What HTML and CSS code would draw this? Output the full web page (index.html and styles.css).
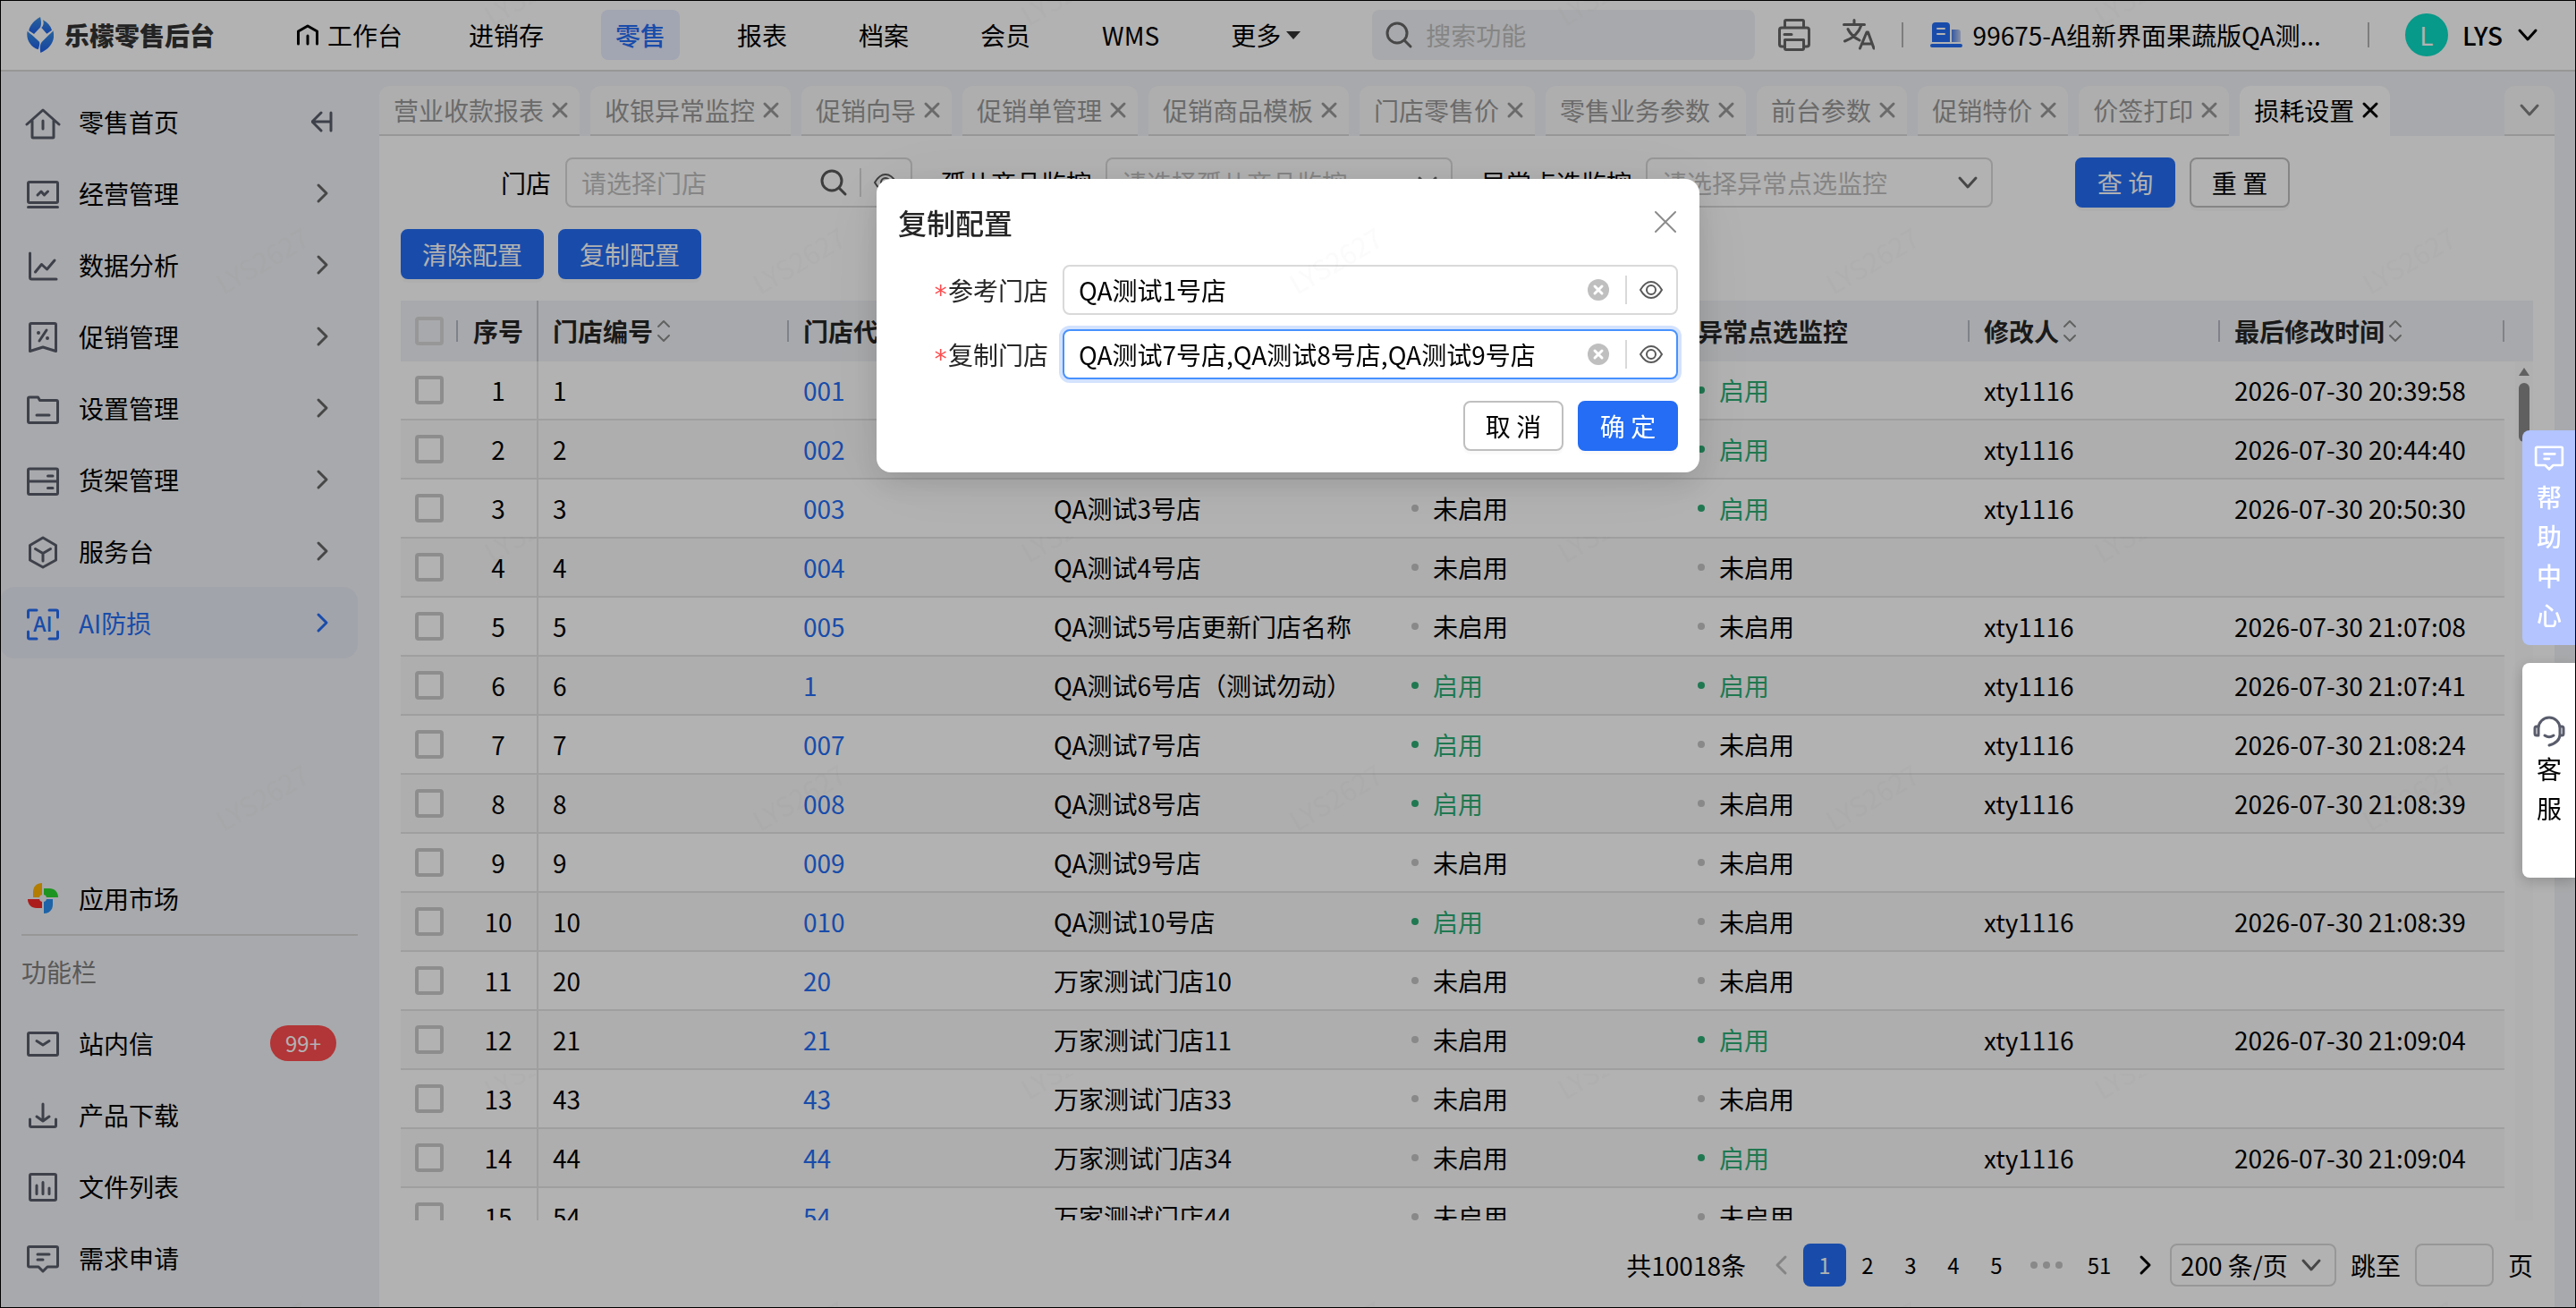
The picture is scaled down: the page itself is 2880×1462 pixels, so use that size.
FILE: index.html
```html
<!DOCTYPE html>
<html lang="zh-CN">
<head>
<meta charset="utf-8">
<meta name="viewport" content="width=device-width, initial-scale=1">
<title>乐檬零售后台</title>
<link rel="stylesheet" href="styles.css">
</head>
<body>
<svg class="defs" aria-hidden="true">
  <defs>
    <linearGradient id="g-logo" x1="0" y1="0" x2="0" y2="1"><stop offset="0" stop-color="#3a8fe0"/><stop offset="1" stop-color="#1f5fe8"/></linearGradient>
    <linearGradient id="g-build" x1="0" y1="0" x2="1" y2="0"><stop offset="0" stop-color="#4f80e8"/><stop offset="1" stop-color="#c4d0ec"/></linearGradient>
    <symbol id="chev-r" viewBox="0 0 24 24"><path d="M8 3l9 9-9 9"/></symbol>
    <symbol id="chev-l" viewBox="0 0 24 24"><path d="M16 3l-9 9 9 9"/></symbol>
    <symbol id="chev-d" viewBox="0 0 24 24"><path d="M3 7l9 10 9-10"/></symbol>
    <symbol id="close" viewBox="0 0 24 24"><path d="M5 5l14 14M19 5L5 19"/></symbol>
    <symbol id="sort" viewBox="0 0 16 28"><path d="M2 9l6-6 6 6M2 19l6 6 6-6"/></symbol>
    <symbol id="search" viewBox="0 0 32 32"><circle cx="14" cy="14" r="11"/><path d="M22 22l7 7"/></symbol>
    <symbol id="eye" viewBox="0 0 28 24"><path d="M2 12C6 5 10 3 14 3s8 2 12 9c-4 7-8 9-12 9S6 19 2 12z"/><circle cx="14" cy="12" r="5"/></symbol>
    <symbol id="clear" viewBox="0 0 24 24"><circle cx="12" cy="12" r="12" fill="#bfbfbf" stroke="none"/><path d="M8 8l8 8M16 8l-8 8" stroke="#fff" stroke-width="3"/></symbol>
    <symbol id="message" viewBox="0 0 40 40"><path d="M5 7.500h30a1.500 1.500 0 0 1 1.500 1.500v19.500a1.500 1.500 0 0 1-1.500 1.500H25l-5 5-5-5H5a1.500 1.500 0 0 1-1.500-1.500V9A1.500 1.500 0 0 1 5 7.500zM14 16h13M14 22h6"/></symbol>
  </defs>
</svg>

<div class="app">
  <header class="topbar">
    <div class="brand">
      <svg class="logo" viewBox="0 0 90 120" fill="url(#g-logo)"><path d="M45 0C24 12 9 28 7 46L24 57 44 36C50 28 48 12 45 0z"/><path d="M54 10C58 20 56 30 49 36L67 56 84 44C80 30 70 18 54 10z"/><path d="M2 47C-4 74 12 100 38 109 42 98 44 90 42 83L17 60C11 55 5 51 2 47z"/><path d="M88 46C97 76 80 106 46 120 43 106 44 92 50 84L74 60C80 55 85 51 88 46z"/></svg>
      <strong class="brand-name">乐檬零售后台</strong>
    </div>
    <nav class="nav">
      <a href="#" class="nav-item nav-home"><svg class="nav-icon" viewBox="0 0 24 24"><path d="M1.500 22V8L12 2l10.500 6v14M12 13v9"/></svg>工作台</a>
      <a href="#" class="nav-item">进销存</a>
      <a href="#" class="nav-item is-active">零售</a>
      <a href="#" class="nav-item">报表</a>
      <a href="#" class="nav-item">档案</a>
      <a href="#" class="nav-item">会员</a>
      <a href="#" class="nav-item">WMS</a>
      <a href="#" class="nav-item">更多<span class="caret"></span></a>
    </nav>
    <label class="top-search"><svg class="ico-32"><use href="#search"/></svg><input type="text" placeholder="搜索功能" aria-label="搜索功能"></label>
    <div class="top-tools">
      <button type="button" class="icon-btn" aria-label="打印"><svg class="ico-40" viewBox="0 0 40 40"><path d="M9.500 12V5a1.500 1.500 0 0 1 1.500-1.500h18A1.500 1.500 0 0 1 30.500 5v7M9 33H6a2.500 2.500 0 0 1-2.500-2.500v-16A2.500 2.500 0 0 1 6 12h28a2.500 2.500 0 0 1 2.500 2.500v16A2.500 2.500 0 0 1 34 33h-3M9.500 25.500h21V35a1.500 1.500 0 0 1-1.500 1.500H11A1.500 1.500 0 0 1 9.500 35zM9 19.500h8"/></svg></button>
      <button type="button" class="icon-btn" aria-label="语言"><svg class="ico-40 thick" viewBox="0 0 40 40"><path d="M5.500 8.500h23M17 3.500v5M25 9C22 18 15 24 6.500 27M10 13.500C13 20 17 23 23 26M23.500 35l7.500-18h1.500L39 35M26 30h11"/></svg></button>
      <span class="rule"></span>
      <a href="#" class="company"><svg class="company-icon" viewBox="0 0 36 28"><path d="M2 22V4a4 4 0 0 1 4-4h12a4 4 0 0 1 4 4v18z" fill="#246df4"/><path d="M24 8h7a3 3 0 0 1 3 3v11H24z" fill="url(#g-build)"/><rect y="24" width="36" height="4" rx="2" fill="#246df4"/><path d="M8 7h8M8 13h8" stroke="#fff" stroke-width="2"/></svg>99675-A组新界面果蔬版QA测...</a>
      <span class="rule rule-far"></span>
      <button type="button" class="account"><span class="avatar">L</span><span>LYS</span><svg class="ico-24"><use href="#chev-d"/></svg></button>
    </div>
  </header>

  <aside class="sidebar">
    <nav class="side-group">
      <div class="side-item side-first"><a href="#" class="side-link"><svg class="ico-40" viewBox="0 0 40 40"><path d="M2 23L20 7l18 16M8 18.500V37a1 1 0 0 0 1 1h22a1 1 0 0 0 1-1V18.500M20 19v9"/></svg>零售首页</a><button type="button" class="icon-btn" aria-label="收起菜单"><svg class="ico-24 thick" viewBox="0 0 24 24"><path d="M11 2L1 12l10 10M1 12h21M22 2v20"/></svg></button></div>
      <a href="#" class="side-item"><svg class="ico-40" viewBox="0 0 40 40"><rect x="3.500" y="7.500" width="33" height="23" rx="1.500"/><path d="M3.500 35.500h33M14 22l4-4 3.500 4 4-4"/></svg>经营管理<svg class="ico-24 tail"><use href="#chev-r"/></svg></a>
      <a href="#" class="side-item"><svg class="ico-40" viewBox="0 0 40 40"><path d="M5.500 7v27a2 2 0 0 0 2 2H35M11.500 28l7-8.500 6 5.500L33 15"/></svg>数据分析<svg class="ico-24 tail"><use href="#chev-r"/></svg></a>
      <a href="#" class="side-item"><svg class="ico-40" viewBox="0 0 40 40"><path d="M7 5.500h26a1.500 1.500 0 0 1 1.500 1.500v29.500L20 32 5.500 36.500V7A1.500 1.500 0 0 1 7 5.500zM24 13l-8 12"/><path d="M15 16h0M25 22h0" stroke-width="4"/></svg>促销管理<svg class="ico-24 tail"><use href="#chev-r"/></svg></a>
      <a href="#" class="side-item"><svg class="ico-40" viewBox="0 0 40 40"><path d="M5 8h9.500l2 3.500H35a1.500 1.500 0 0 1 1.500 1.500v22a1.500 1.500 0 0 1-1.500 1.500H5A1.500 1.500 0 0 1 3.500 35V9.500A1.500 1.500 0 0 1 5 8zM13 28h14"/></svg>设置管理<svg class="ico-24 tail"><use href="#chev-r"/></svg></a>
      <a href="#" class="side-item"><svg class="ico-40" viewBox="0 0 40 40"><rect x="3.500" y="8" width="33" height="28.500" rx="1.500"/><path d="M3.500 22h33M25.500 16H31M25.500 29.500H31"/></svg>货架管理<svg class="ico-24 tail"><use href="#chev-r"/></svg></a>
      <a href="#" class="side-item"><svg class="ico-40" viewBox="0 0 40 40"><path d="M20 5l14.500 8.500v16.500L20 38 5.500 30V13.500zM11.500 17.500L20 22.500l8.500-5M20 22.500V31"/></svg>服务台<svg class="ico-24 tail"><use href="#chev-r"/></svg></a>
      <a href="#" class="side-item is-active"><svg class="ico-40" viewBox="0 0 40 40"><path d="M3.500 14V7.500A1.500 1.500 0 0 1 5 6h8M27 6h8a1.500 1.500 0 0 1 1.500 1.500V14M36.500 30v6.500A1.500 1.500 0 0 1 35 38h-8M13 38H5a1.500 1.500 0 0 1-1.500-1.500V30"/><text x="20" y="30" class="ai-mark">AI</text></svg>AI防损<svg class="ico-24 tail"><use href="#chev-r"/></svg></a>
    </nav>
    <nav class="side-group">
      <a href="#" class="side-item"><svg class="ico-40 pinwheel" viewBox="0 0 40 40"><path d="M19 3v16H9v-6C9 7 13 3 19 3z" fill="#ffb300"/><path d="M37 19H21V9h6c6 0 10 4 10 10z" fill="#2ad52e"/><path d="M3 21h16v10h-6C7 31 3 27 3 21z" fill="#f52a2a"/><path d="M21 37V21h10v6c0 6-4 10-10 10z" fill="#2a8ff0"/><circle cx="20" cy="20" r="4" fill="#eef1f5"/></svg>应用市场</a>
      <hr class="side-rule">
      <p class="side-title">功能栏</p>
      <a href="#" class="side-item"><svg class="ico-40" viewBox="0 0 40 40"><rect x="3.500" y="8.500" width="33" height="25" rx="1.500"/><path d="M13 17.500l7 4.500 7-4.500"/></svg>站内信<span class="badge">99+</span></a>
      <a href="#" class="side-item"><svg class="ico-40" viewBox="0 0 40 40"><path d="M5.500 25v7a1.500 1.500 0 0 0 1.500 1.500h26a1.500 1.500 0 0 0 1.500-1.500v-7M20 8v19M13 22l7 5 7-5"/></svg>产品下载</a>
      <a href="#" class="side-item"><svg class="ico-40" viewBox="0 0 40 40"><rect x="5.500" y="6.500" width="29" height="29" rx="1.500"/><path d="M13 19v9.500M20 15.500v13M27 22v6.500"/></svg>文件列表</a>
      <a href="#" class="side-item"><svg class="ico-40"><use href="#message"/></svg>需求申请</a>
    </nav>
  </aside>

  <main class="content">
    <div class="tabs">
      <a href="#" class="tab">营业收款报表<svg class="ico-24"><use href="#close"/></svg></a>
      <a href="#" class="tab">收银异常监控<svg class="ico-24"><use href="#close"/></svg></a>
      <a href="#" class="tab">促销向导<svg class="ico-24"><use href="#close"/></svg></a>
      <a href="#" class="tab">促销单管理<svg class="ico-24"><use href="#close"/></svg></a>
      <a href="#" class="tab">促销商品模板<svg class="ico-24"><use href="#close"/></svg></a>
      <a href="#" class="tab">门店零售价<svg class="ico-24"><use href="#close"/></svg></a>
      <a href="#" class="tab">零售业务参数<svg class="ico-24"><use href="#close"/></svg></a>
      <a href="#" class="tab">前台参数<svg class="ico-24"><use href="#close"/></svg></a>
      <a href="#" class="tab">促销特价<svg class="ico-24"><use href="#close"/></svg></a>
      <a href="#" class="tab">价签打印<svg class="ico-24"><use href="#close"/></svg></a>
      <a href="#" class="tab is-active">损耗设置<svg class="ico-24"><use href="#close"/></svg></a>
      <button type="button" class="tab tab-more" aria-label="更多标签"><svg class="ico-24"><use href="#chev-d"/></svg></button>
    </div>

    <section class="panel">
      <form class="filters">
        <label class="filter-label" for="f-store">门店</label>
        <div class="field">
          <input id="f-store" type="text" placeholder="请选择门店">
          <svg class="ico-32"><use href="#search"/></svg><span class="field-rule"></span><svg class="ico-eye"><use href="#eye"/></svg>
        </div>
        <label class="filter-label" for="f-orphan">孤儿商品监控</label>
        <div class="field select-field">
          <select id="f-orphan" class="is-empty"><option>请选择孤儿商品监控</option></select>
          <svg class="ico-24"><use href="#chev-d"/></svg>
        </div>
        <label class="filter-label" for="f-point">异常点选监控</label>
        <div class="field select-field">
          <select id="f-point" class="is-empty"><option>请选择异常点选监控</option></select>
          <svg class="ico-24"><use href="#chev-d"/></svg>
        </div>
        <div class="filter-actions">
          <button type="button" class="btn btn-primary">查 询</button>
          <button type="reset" class="btn">重 置</button>
        </div>
      </form>

      <div class="actions">
        <button type="button" class="btn btn-primary">清除配置</button>
        <button type="button" class="btn btn-primary">复制配置</button>
      </div>

      <div class="table-area">
        <table class="grid">
          <colgroup><col class="c-check"><col class="c-no"><col class="c-id"><col class="c-code"><col class="c-name"><col class="c-flag"><col class="c-flag"><col class="c-user"><col></colgroup>
          <thead>
            <tr>
              <th><span class="th"><input type="checkbox" aria-label="全选"></span></th>
              <th class="no">序号</th>
              <th><span class="th">门店编号<svg class="ico-sort"><use href="#sort"/></svg></span></th>
              <th><span class="th">门店代码</span></th>
              <th><span class="th">门店名称</span></th>
              <th><span class="th">孤儿商品监控</span></th>
              <th><span class="th">异常点选监控</span></th>
              <th><span class="th">修改人<svg class="ico-sort"><use href="#sort"/></svg></span></th>
              <th><span class="th">最后修改时间<svg class="ico-sort"><use href="#sort"/></svg></span></th>
            </tr>
          </thead>
          <tbody>
            <tr><td><input type="checkbox" aria-label="选择第1行"></td><td class="no">1</td><td>1</td><td><a href="#">001</a></td><td>QA测试1号店</td><td><span class="flag on">启用</span></td><td><span class="flag on">启用</span></td><td>xty1116</td><td>2026-07-30 20:39:58</td></tr>
            <tr><td><input type="checkbox" aria-label="选择第2行"></td><td class="no">2</td><td>2</td><td><a href="#">002</a></td><td>QA测试2号店</td><td><span class="flag on">启用</span></td><td><span class="flag on">启用</span></td><td>xty1116</td><td>2026-07-30 20:44:40</td></tr>
            <tr><td><input type="checkbox" aria-label="选择第3行"></td><td class="no">3</td><td>3</td><td><a href="#">003</a></td><td>QA测试3号店</td><td><span class="flag">未启用</span></td><td><span class="flag on">启用</span></td><td>xty1116</td><td>2026-07-30 20:50:30</td></tr>
            <tr><td><input type="checkbox" aria-label="选择第4行"></td><td class="no">4</td><td>4</td><td><a href="#">004</a></td><td>QA测试4号店</td><td><span class="flag">未启用</span></td><td><span class="flag">未启用</span></td><td></td><td></td></tr>
            <tr><td><input type="checkbox" aria-label="选择第5行"></td><td class="no">5</td><td>5</td><td><a href="#">005</a></td><td>QA测试5号店更新门店名称</td><td><span class="flag">未启用</span></td><td><span class="flag">未启用</span></td><td>xty1116</td><td>2026-07-30 21:07:08</td></tr>
            <tr><td><input type="checkbox" aria-label="选择第6行"></td><td class="no">6</td><td>6</td><td><a href="#">1</a></td><td>QA测试6号店（测试勿动）</td><td><span class="flag on">启用</span></td><td><span class="flag on">启用</span></td><td>xty1116</td><td>2026-07-30 21:07:41</td></tr>
            <tr><td><input type="checkbox" aria-label="选择第7行"></td><td class="no">7</td><td>7</td><td><a href="#">007</a></td><td>QA测试7号店</td><td><span class="flag on">启用</span></td><td><span class="flag">未启用</span></td><td>xty1116</td><td>2026-07-30 21:08:24</td></tr>
            <tr><td><input type="checkbox" aria-label="选择第8行"></td><td class="no">8</td><td>8</td><td><a href="#">008</a></td><td>QA测试8号店</td><td><span class="flag on">启用</span></td><td><span class="flag">未启用</span></td><td>xty1116</td><td>2026-07-30 21:08:39</td></tr>
            <tr><td><input type="checkbox" aria-label="选择第9行"></td><td class="no">9</td><td>9</td><td><a href="#">009</a></td><td>QA测试9号店</td><td><span class="flag">未启用</span></td><td><span class="flag">未启用</span></td><td></td><td></td></tr>
            <tr><td><input type="checkbox" aria-label="选择第10行"></td><td class="no">10</td><td>10</td><td><a href="#">010</a></td><td>QA测试10号店</td><td><span class="flag on">启用</span></td><td><span class="flag">未启用</span></td><td>xty1116</td><td>2026-07-30 21:08:39</td></tr>
            <tr><td><input type="checkbox" aria-label="选择第11行"></td><td class="no">11</td><td>20</td><td><a href="#">20</a></td><td>万家测试门店10</td><td><span class="flag">未启用</span></td><td><span class="flag">未启用</span></td><td></td><td></td></tr>
            <tr><td><input type="checkbox" aria-label="选择第12行"></td><td class="no">12</td><td>21</td><td><a href="#">21</a></td><td>万家测试门店11</td><td><span class="flag">未启用</span></td><td><span class="flag on">启用</span></td><td>xty1116</td><td>2026-07-30 21:09:04</td></tr>
            <tr><td><input type="checkbox" aria-label="选择第13行"></td><td class="no">13</td><td>43</td><td><a href="#">43</a></td><td>万家测试门店33</td><td><span class="flag">未启用</span></td><td><span class="flag">未启用</span></td><td></td><td></td></tr>
            <tr><td><input type="checkbox" aria-label="选择第14行"></td><td class="no">14</td><td>44</td><td><a href="#">44</a></td><td>万家测试门店34</td><td><span class="flag">未启用</span></td><td><span class="flag on">启用</span></td><td>xty1116</td><td>2026-07-30 21:09:04</td></tr>
            <tr><td><input type="checkbox" aria-label="选择第15行"></td><td class="no">15</td><td>54</td><td><a href="#">54</a></td><td>万家测试门店44</td><td><span class="flag">未启用</span></td><td><span class="flag">未启用</span></td><td></td><td></td></tr>
          </tbody>
        </table>
        <div class="scroll-col"><div class="scroll-head"></div><div class="scroll-track"><i class="arrow-up"></i><i class="thumb"></i><i class="arrow-down"></i></div></div>
      </div>

      <div class="pager">
        <span class="pager-total">共10018条</span>
        <button type="button" class="page" disabled aria-label="上一页"><svg class="ico-24"><use href="#chev-l"/></svg></button>
        <button type="button" class="page is-active">1</button>
        <button type="button" class="page">2</button>
        <button type="button" class="page">3</button>
        <button type="button" class="page">4</button>
        <button type="button" class="page">5</button>
        <span class="page-dots"><i></i><i></i><i></i></span>
        <button type="button" class="page page-last">51</button>
        <button type="button" class="page" aria-label="下一页"><svg class="ico-24"><use href="#chev-r"/></svg></button>
        <div class="field select-field size-field"><select aria-label="每页条数"><option>200 条/页</option></select><svg class="ico-24"><use href="#chev-d"/></svg></div>
        <label class="jump" for="jump">跳至</label>
        <input id="jump" class="jump-input" type="text">
        <span>页</span>
      </div>
    </section>
  </main>
</div>

<div class="mask"></div>

<div class="side-floats">
  <button type="button" class="float float-help"><svg class="float-msg"><use href="#message"/></svg><span>帮</span><span>助</span><span>中</span><span>心</span></button>
  <button type="button" class="float float-service"><svg class="ico-40" viewBox="0 0 40 40"><path d="M8 24V17a12 12 0 0 1 24 0v7c0 6-5 10-12 12M7.500 15H6a2 2 0 0 0-2 2v6a2 2 0 0 0 2 2h2M32.500 15H34a2 2 0 0 1 2 2v6a2 2 0 0 1-2 2h-2M15 25c3 2 7 2 10 0"/></svg><span>客</span><span>服</span></button>
</div>

<div class="dialog-layer">
  <form class="dialog" role="dialog" aria-labelledby="dlg-title">
    <div class="dialog-head"><h2 id="dlg-title">复制配置</h2><button type="button" class="icon-btn dialog-close" aria-label="关闭"><svg class="ico-32" viewBox="0 0 32 32"><path d="M5 5l22 22M27 5L5 27"/></svg></button></div>
    <div class="dialog-row">
      <label for="d-from"><span class="req">*</span>参考门店</label>
      <div class="field"><input id="d-from" type="text" value="QA测试1号店"><svg class="ico-24 clear"><use href="#clear"/></svg><span class="field-rule"></span><svg class="ico-eye"><use href="#eye"/></svg></div>
    </div>
    <div class="dialog-row">
      <label for="d-to"><span class="req">*</span>复制门店</label>
      <div class="field is-focused"><input id="d-to" type="text" value="QA测试7号店,QA测试8号店,QA测试9号店"><svg class="ico-24 clear"><use href="#clear"/></svg><span class="field-rule"></span><svg class="ico-eye"><use href="#eye"/></svg></div>
    </div>
    <div class="dialog-foot"><button type="button" class="btn">取 消</button><button type="button" class="btn btn-primary">确 定</button></div>
  </form>
</div>

<svg class="watermark" aria-hidden="true">
  <defs><pattern id="wm" width="600" height="600" patternUnits="userSpaceOnUse"><text x="250" y="330" transform="rotate(-30 250 330)">LYS2627</text><text x="550" y="30" transform="rotate(-30 550 30)">LYS2627</text></pattern></defs>
  <rect width="100%" height="100%" fill="url(#wm)"/>
</svg>
</body>
</html>
```
FILE: styles.css
```css
:root {
  --primary: #246df4;
  --line: #d9d9d9;
  --text: #000;
  --surface: #f1f3f6;
  --green: #2ead75;
}

* { box-sizing: border-box; }

body {
  margin: 0;
  font-family: "Noto Sans CJK SC", sans-serif;
  font-size: 28px;
  line-height: 44px;
  color: var(--text);
  overflow: hidden;
}

a { color: inherit; text-decoration: none; }
button, input, select { font: inherit; color: inherit; }
button { cursor: pointer; }

svg {
  flex: none;
  fill: none;
  stroke: currentColor;
  stroke-width: 2;
  stroke-linecap: round;
  stroke-linejoin: round;
}

.defs { position: absolute; width: 0; height: 0; }
.ico-24 { width: 24px; height: 24px; }
.ico-32 { width: 32px; height: 32px; stroke-width: 3; }
.ico-40 { width: 40px; height: 40px; stroke-width: 3; }
.ico-eye { width: 28px; height: 24px; color: #595959; }
.ico-sort { width: 16px; height: 28px; color: #8c8c8c; }

.icon-btn {
  display: flex;
  padding: 0;
  border: 0;
  background: none;
  color: #666;
}

/* Page shell */
.app {
  display: grid;
  grid-template: 80px minmax(0, 1fr) / 424px minmax(0, 1fr);
  height: 100vh;
  background: var(--surface);
}

/* Top bar */
.topbar {
  grid-column: 1 / -1;
  display: flex;
  align-items: center;
  padding: 0 42px 0 30px;
  background: #fff;
  border-bottom: 2px solid var(--line);
  white-space: nowrap;
}

.brand { display: flex; align-items: center; gap: 12px; }
.logo { width: 30px; height: 40px; stroke: none; fill: url(#g-logo); }
.brand-name { font-weight: 900; color: #333; }

.nav { display: flex; gap: 48px; margin-left: 76px; }
.nav-item {
  display: flex;
  align-items: center;
  height: 56px;
  padding: 0 16px;
  border-radius: 8px;
}
.nav-item.is-active { background: #e9ecff; color: var(--primary); font-weight: 500; }
.nav-home { gap: 10px; padding-right: 10px; }
.nav-icon { width: 24px; height: 24px; stroke-width: 3; }
.caret {
  margin-left: 6px;
  border: 8px solid transparent;
  border-top: 9px solid #333;
  border-bottom: 0;
}

.top-search {
  display: flex;
  align-items: center;
  gap: 14px;
  flex: 0 1 428px;
  height: 56px;
  margin-left: 64px;
  padding: 0 14px;
  border-radius: 8px;
  background: var(--surface);
  color: #666;
}
.top-search input { flex: 1; min-width: 0; border: 0; padding: 0; background: none; outline: 0; }
::placeholder { color: #bfbfbf; opacity: 1; }

.top-tools { display: flex; align-items: center; margin-left: auto; }
.top-tools > .icon-btn { margin-right: 30px; }
.thick { stroke-width: 3; }
.rule { width: 2px; height: 28px; background: #b3b3b3; }
.company { display: flex; align-items: center; gap: 12px; margin: 0 52px 0 30px; }
.company-icon { width: 36px; height: 28px; stroke: none; }
.account {
  display: flex;
  align-items: center;
  gap: 16px;
  margin-left: 40px;
  padding: 0;
  border: 0;
  background: none;
  font-weight: 500;
}
.account .ico-24 { stroke-width: 3; }
.avatar {
  width: 48px;
  height: 48px;
  border-radius: 50%;
  background: #0bdcc4;
  color: #fff;
  font-weight: 400;
  line-height: 48px;
}

/* Side menu */
.sidebar {
  display: flex;
  flex-direction: column;
  justify-content: space-between;
  padding: 16px 24px 16px 0;
  overflow: hidden;
}
.side-item {
  display: flex;
  align-items: center;
  gap: 20px;
  height: 80px;
  padding: 0 28px;
  border-radius: 16px;
}
.side-item svg { color: #595c6b; }
.side-item .tail { margin-left: auto; color: #666; stroke-width: 3; }
.side-item.is-active { background: #e9ebf5; color: var(--primary); }
.side-item.is-active svg { color: var(--primary); }
.side-first { justify-content: space-between; }
.side-link { display: flex; align-items: center; gap: 20px; }
.ai-mark {
  font-size: 23px;
  font-weight: 500;
  text-anchor: middle;
  fill: currentColor;
  stroke: none;
}
.pinwheel { stroke: none; }
.side-rule { margin: 0 0 0 24px; border: 0; border-top: 2px solid var(--line); }
.side-title { margin: 0; padding-left: 24px; color: #808080; line-height: 80px; }
.badge {
  margin-left: auto;
  margin-right: -4px;
  padding: 0 17px;
  border-radius: 20px;
  background: #ff4d4f;
  color: #fff;
  font-size: 24px;
  line-height: 40px;
}

/* Tabs */
.content {
  display: flex;
  flex-direction: column;
  min-width: 0;
  padding: 16px 24px 0 0;
}
.tabs { display: flex; gap: 12px; white-space: nowrap; }
.tab {
  display: flex;
  align-items: center;
  gap: 6px;
  height: 56px;
  padding: 0 10px 0 16px;
  border: 0;
  border-bottom: 2px solid var(--line);
  border-radius: 12px 12px 0 0;
  background: #fafafa;
  color: #999;
}
.tab.is-active { background: #fff; border-color: #fff; color: #000; }
.tab .ico-24 { stroke-width: 3; }
.tab-more { margin-left: auto; padding: 0 16px; color: #808080; }

/* Panel */
.panel {
  flex: 1;
  display: flex;
  flex-direction: column;
  min-height: 0;
  padding: 24px;
  background: #fff;
}
.filters { display: flex; align-items: center; gap: 16px; }
.filter-label { width: 168px; text-align: right; white-space: nowrap; }
.filters .field { width: 388px; }
.filters .field + .filter-label { margin-left: 16px; }
.filter-actions { display: flex; gap: 16px; margin-left: 76px; }

.field {
  display: flex;
  align-items: center;
  gap: 13px;
  min-width: 0;
  height: 56px;
  padding: 0 14px 0 16px;
  border: 2px solid var(--line);
  border-radius: 8px;
  background: #fff;
}
.field .ico-32 { color: #595959; }
.field .clear { margin-right: 5px; }
.field input, .field select {
  flex: 1;
  min-width: 0;
  padding: 0;
  border: 0;
  outline: 0;
  background: none;
  appearance: none;
}
.field-rule { width: 2px; height: 32px; background: var(--line); }
.field.is-focused { border-color: #4791ff; box-shadow: 0 0 0 4px #d3e2fd; }

.select-field { display: grid; grid-template-columns: minmax(0, 1fr); }
.select-field > * { grid-area: 1 / 1; }
.select-field svg { justify-self: end; color: #666; stroke-width: 3; pointer-events: none; }
.select-field select { height: 44px; line-height: 44px; }
.select-field select.is-empty { color: #bfbfbf; }

.btn {
  min-width: 112px;
  height: 56px;
  padding: 0 22px;
  border: 2px solid #bfbfbf;
  border-radius: 8px;
  background: #fff;
  box-shadow: 0 4px 0 rgba(0, 0, 0, .02);
  line-height: 48px;
  white-space: nowrap;
}
.btn-primary { border-color: var(--primary); background: var(--primary); color: #fff; }

.actions { display: flex; gap: 16px; margin: 24px 0; }

/* Table */
.table-area {
  flex: 1;
  display: grid;
  grid-template-columns: minmax(0, 1fr) 32px;
  min-height: 0;
  overflow: hidden;
}
.grid {
  width: 100%;
  align-self: start;
  border-collapse: separate;
  border-spacing: 0;
  table-layout: fixed;
  white-space: nowrap;
}
.c-check { width: 64px; }
.c-no { width: 90px; }
.c-id, .c-code, .c-user { width: 280px; }
.c-name { width: 400px; }
.c-flag { width: 320px; }

.grid th {
  height: 68px;
  padding: 0 0 0 16px;
  background: var(--surface);
  color: #262626;
  font-weight: 700;
  text-align: left;
}
.grid td { height: 66px; padding: 0 0 0 16px; border-bottom: 2px solid #e4e4e4; }
.grid tr:nth-child(even) td { background: #fafafa; }
.grid .no { padding: 0 0 0 2px; border-right: 2px solid #e4e4e4; text-align: center; }
.grid th.no { border-right-color: #c8cacf; }
.th { display: flex; align-items: center; gap: 4px; height: 44px; }
.th::after { content: ""; width: 2px; height: 24px; margin-left: auto; background: #b8bbc6; }
.grid a { color: var(--primary); }
.grid input {
  display: block;
  width: 32px;
  height: 32px;
  margin: 0;
  border: 4px solid #cbcbcb;
  border-radius: 4px;
  background: #fff;
  appearance: none;
}
.grid th input { border-color: #d9d9d9; background: none; }

.flag { display: flex; align-items: center; gap: 16px; }
.flag::before { content: ""; width: 8px; height: 8px; border-radius: 50%; background: #c4c4c4; }
.flag.on { color: var(--green); }
.flag.on::before { background: var(--green); }

.scroll-col { display: flex; flex-direction: column; }
.scroll-head { height: 68px; background: var(--surface); }
.scroll-track {
  flex: 1;
  display: flex;
  flex-direction: column;
  align-items: center;
  width: 20px;
  margin-left: auto;
  padding: 7px 0;
  background: #fcfcfc;
}
.arrow-up { border: 6px solid transparent; border-top: 0; border-bottom: 9px solid #8a8a8a; }
.thumb { width: 12px; height: 66px; margin-top: 8px; border-radius: 6px; background: #8a8a8a; }
.arrow-down { margin-top: auto; border: 6px solid transparent; border-bottom: 0; border-top: 9px solid #8a8a8a; }

/* Pager */
.pager { display: flex; justify-content: flex-end; align-items: center; margin-top: 26px; white-space: nowrap; }
.pager-total { margin-right: 16px; }
.page {
  display: flex;
  align-items: center;
  justify-content: center;
  min-width: 48px;
  height: 48px;
  padding: 0;
  border: 0;
  border-radius: 8px;
  background: none;
  font-size: 24px;
}
.page svg { stroke-width: 3; }
.page:disabled { color: #bfbfbf; }
.page.is-active { background: var(--primary); color: #fff; }
.page-last { width: 54px; }
.page-dots { display: flex; justify-content: center; gap: 6px; width: 64px; }
.page-dots i { width: 8px; height: 8px; border-radius: 50%; background: #c4c4c4; }
.size-field { width: 186px; height: 48px; margin: 0 16px 0 4px; padding: 0 14px 0 10px; }
.jump { margin-right: 16px; }
.jump-input {
  width: 88px;
  height: 48px;
  margin-right: 16px;
  border: 2px solid var(--line);
  border-radius: 8px;
  background: #fff;
}

/* Overlays */
.mask { position: fixed; inset: 0; background: rgba(0, 0, 0, .3); }

.side-floats {
  position: fixed;
  top: 481px;
  right: 0;
  display: flex;
  flex-direction: column;
  gap: 20px;
}
.float {
  display: flex;
  flex-direction: column;
  align-items: center;
  justify-content: center;
  width: 60px;
  height: 240px;
  padding: 0;
  border: 0;
  border-radius: 8px 0 0 8px;
}
.float-help { padding-bottom: 4px; background: #b3c4ff; color: #fff; font-weight: 500; }
.float-msg { width: 36px; height: 36px; margin: 4px 0; stroke-width: 3; }
.float-service { background: #fff; box-shadow: 0 4px 16px rgba(0, 0, 0, .2); }
.float-service svg { color: #595c6b; stroke-width: 3; }

.dialog-layer {
  position: fixed;
  inset: 0;
  display: flex;
  align-items: flex-start;
  justify-content: center;
  padding-top: 200px;
  pointer-events: none;
}
.dialog {
  display: flex;
  flex-direction: column;
  width: 920px;
  padding: 24px;
  border-radius: 16px;
  background: #fff;
  box-shadow: 0 12px 32px rgba(0, 0, 0, .12), 0 6px 96px rgba(0, 0, 0, .06);
  pointer-events: auto;
}
.dialog-head { display: flex; align-items: center; justify-content: space-between; height: 48px; margin-bottom: 24px; }
.dialog-head h2 { margin: 0; color: #262626; font-size: 32px; font-weight: 500; line-height: 48px; }
.dialog-close { color: #8c8c8c; }
.dialog-close svg { margin-right: -2px; stroke-width: 2; }
.dialog-row { display: grid; grid-template-columns: 168px minmax(0, 1fr); gap: 16px; margin-bottom: 16px; }
.dialog-row label { display: flex; justify-content: flex-end; color: #262626; line-height: 56px; }
.req { padding-top: 12px; color: #ff4d4f; font-family: "DejaVu Sans Mono", monospace; line-height: 44px; }
.dialog-foot { display: flex; justify-content: flex-end; gap: 16px; margin-top: 8px; }

.watermark { position: fixed; inset: 0; width: 100%; height: 100%; pointer-events: none; }
.watermark text { fill: #000; fill-opacity: .014; stroke: none; font-size: 30px; }
```
